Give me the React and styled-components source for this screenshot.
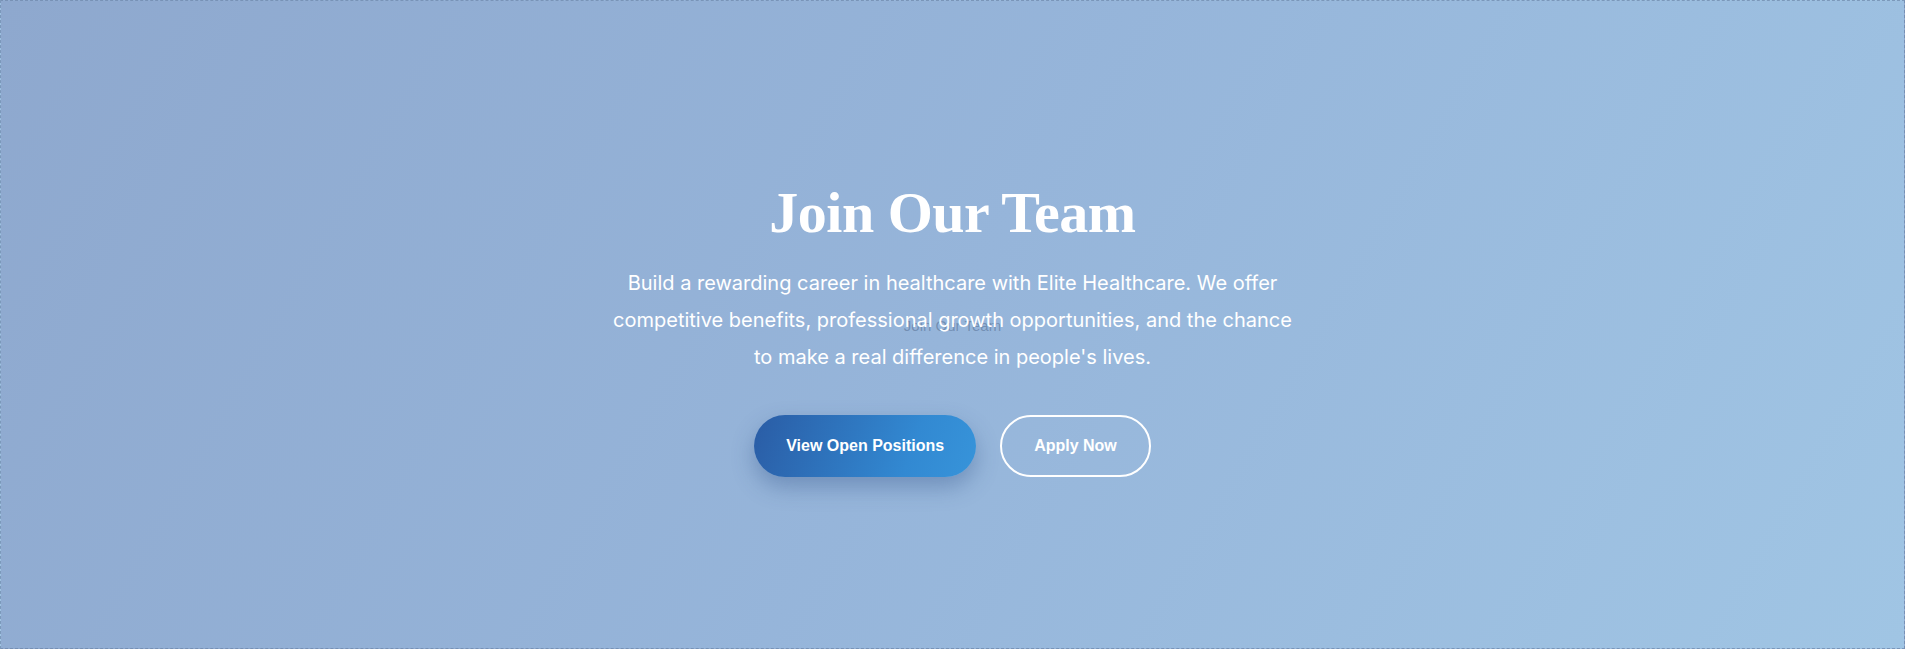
import React from 'react';
import styled, { createGlobalStyle } from 'styled-components';

const GlobalStyle = createGlobalStyle`
  * {
    box-sizing: border-box;
  }

  body {
    margin: 0;
    font-family: Inter, "Liberation Sans", sans-serif;
  }
`;

const Hero = styled.section`
  position: relative;
  display: flex;
  align-items: center;
  justify-content: center;
  width: 100%;
  height: 649px;
  border: 1px dashed rgba(110, 135, 170, 0.7);
  background: linear-gradient(120deg, #8ea8ce 0%, #96b5da 50%, #a0c5e4 100%);
  overflow: hidden;
`;

// alt text of the missing backdrop picture, seen faintly through the tint
const BackdropAlt = styled.span`
  position: absolute;
  top: 50%;
  left: 50%;
  transform: translate(-50%, -50%);
  color: rgba(70, 95, 130, 0.45);
  font-family: "Liberation Sans", sans-serif;
  font-size: 15px;
  white-space: nowrap;
`;

const Content = styled.div`
  position: relative;
  display: flex;
  flex-direction: column;
  align-items: center;
  max-width: 700px;
  padding-top: 8px;
  text-align: center;
`;

const Title = styled.h1`
  margin: 0 0 18px;
  color: #fff;
  font-family: "Liberation Serif", "DejaVu Serif", serif;
  font-size: 58px;
  font-weight: 700;
  line-height: 1.15;
  letter-spacing: -0.5px;
`;

const Lead = styled.p`
  margin: 0 0 39px;
  color: #fff;
  font-family: Inter, "Liberation Sans", sans-serif;
  font-size: 20px;
  line-height: 37px;
`;

const Actions = styled.div`
  display: flex;
  gap: 24px;
`;

const Button = styled.a`
  display: inline-flex;
  align-items: center;
  justify-content: center;
  height: 62px;
  padding: 0 32px;
  border-radius: 31px;
  color: #fff;
  font-family: "Liberation Sans", Arial, sans-serif;
  font-size: 16px;
  font-weight: 700;
  text-decoration: none;
  cursor: pointer;
  border: ${(p) => (p.$outline ? '2px solid #fff' : 'none')};
  background: ${(p) => (p.$outline
    ? 'transparent'
    : 'linear-gradient(110deg, #2a5ca5 0%, #3289d2 70%, #3794da 100%)')};
  box-shadow: ${(p) => (p.$outline ? 'none' : '0 10px 22px rgba(40, 75, 130, 0.35)')};
`;

function App() {
  return (
    <>
      <GlobalStyle />
      <Hero>
        <BackdropAlt>Join Our Team</BackdropAlt>
        <Content>
          <Title>Join Our Team</Title>
          <Lead>
            Build a rewarding career in healthcare with Elite Healthcare. We offer
            competitive benefits, professional growth opportunities, and the chance
            to make a real difference in people&apos;s lives.
          </Lead>
          <Actions>
            <Button href="#positions">View Open Positions</Button>
            <Button href="#apply" $outline>Apply Now</Button>
          </Actions>
        </Content>
      </Hero>
    </>
  );
}

export default App;
